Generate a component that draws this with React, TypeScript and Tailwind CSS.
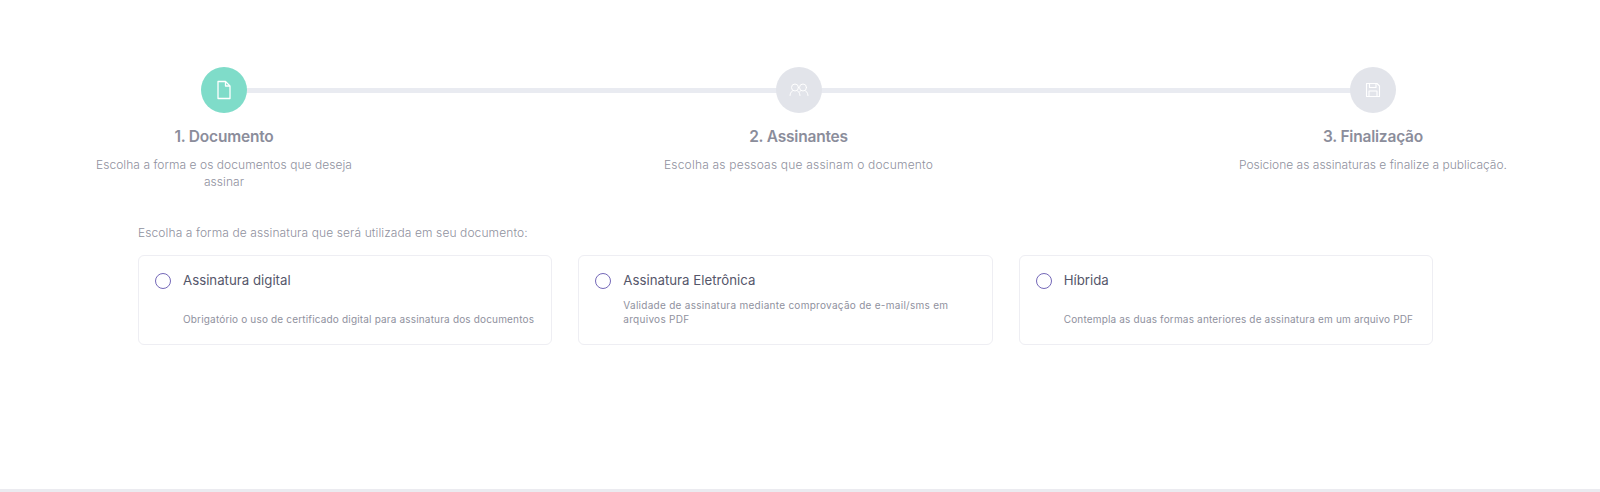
const font = { fontFamily: '"Inter", "Liberation Sans", sans-serif' };

function FileIcon() {
  return (
    <svg width="16" height="20" viewBox="0 0 16 20" fill="none" stroke="#ffffff" strokeWidth="1.3" strokeLinejoin="round">
      <path d="M2 1.5h7.5L14 6v12.5H2z" />
      <path d="M9.5 1.5V6H14" />
    </svg>
  );
}

function UsersIcon() {
  return (
    <svg width="20" height="14" viewBox="0 0 20 14" fill="none" stroke="#ffffff" strokeWidth="1" strokeLinecap="round">
      <circle cx="6" cy="4.5" r="3.5" />
      <path d="M1 12.5c0-2.8 1.8-4.5 3.2-4.9M7.8 7.6c1.4.4 3.2 2.1 3.2 4.9" />
      <circle cx="14" cy="4.5" r="3.5" />
      <path d="M12.2 7.6c-.6.2-1.2.6-1.7 1.2M15.8 7.6c1.4.4 3.2 2.1 3.2 4.9" />
    </svg>
  );
}

function SaveIcon() {
  return (
    <svg width="16" height="16" viewBox="0 0 16 16" fill="none" stroke="#ffffff" strokeWidth="1.1" strokeLinejoin="round">
      <path d="M1.5 1.5h10.5l2.5 2.5v10.5h-13z" />
      <path d="M4.5 1.5v4h6.5v-4" />
      <path d="M4 14.5V9h8v5.5" />
    </svg>
  );
}

const steps = [
  { title: "1. Documento", desc: "Escolha a forma e os documentos que deseja assinar", bg: "bg-[#7fdcc9]", track: "tracking-[0.05px]", icon: <FileIcon /> },
  { title: "2. Assinantes", desc: "Escolha as pessoas que assinam o documento", bg: "bg-[#e2e4ea]", track: "tracking-[0.2px]", icon: <UsersIcon /> },
  { title: "3. Finalização", desc: "Posicione as assinaturas e finalize a publicação.", bg: "bg-[#e2e4ea]", track: "tracking-[0px]", icon: <SaveIcon /> },
];

const options = [
  { title: "Assinatura digital", desc: "Obrigatório o uso de certificado digital para assinatura dos documentos", pad: "pt-[22px]", track: "tracking-[0.17px]" },
  { title: "Assinatura Eletrônica", desc: "Validade de assinatura mediante comprovação de e-mail/sms em arquivos PDF", pad: "pt-[8px]", track: "tracking-[0.28px]" },
  { title: "Híbrida", desc: "Contempla as duas formas anteriores de assinatura em um arquivo PDF", pad: "pt-[22px]", track: "tracking-[0.17px]" },
];

export default function App() {
  return (
    <div style={font} className="flex h-[492px] w-full flex-col bg-white">
      <main className="flex-1 pt-[67px]">
        <div className="relative ml-[84px] mr-[87px] flex justify-between">
          <div className="absolute left-[140px] right-[140px] top-[21px] h-[5px] bg-[#e9ebf1]" />
          {steps.map((s) => (
            <div key={s.title} className="relative flex w-[280px] flex-col items-center text-center">
              <div className={`flex h-[46px] w-[46px] items-center justify-center rounded-full ${s.bg}`}>{s.icon}</div>
              <div className="mt-[12px] text-[15.5px] font-semibold leading-[24px] tracking-[-0.2px] text-[#8b8d9b]">{s.title}</div>
              <p className={`mt-[7px] text-[12px] font-light leading-[17px] text-[#8f919e] ${s.track}`}>{s.desc}</p>
            </div>
          ))}
        </div>
        <div className="ml-[138px] mr-[167px] mt-[34px]">
          <p className="text-[12px] font-light leading-[18px] tracking-[0.1px] text-[#8f919e]">
            Escolha a forma de assinatura que será utilizada em seu documento:
          </p>
          <div className="mt-[13px] grid grid-cols-3 gap-[26px]">
            {options.map((o) => (
              <div key={o.title} className="h-[90px] rounded-[6px] border border-[#eeeef3] px-[16px] pt-[14px]">
                <div className="flex items-center gap-[12px]">
                  <span className="mt-[2px] h-[16px] w-[16px] shrink-0 rounded-full border border-[#7468b8]" />
                  <span className="text-[13.25px] leading-[20px] text-[#55566a]">{o.title}</span>
                </div>
                <p className={`pl-[28px] text-[10px] leading-[14px] text-[#8f919e] ${o.pad} ${o.track}`}>{o.desc}</p>
              </div>
            ))}
          </div>
        </div>
      </main>
      <footer className="h-[3px] bg-[#ebebf0]" />
    </div>
  );
}
